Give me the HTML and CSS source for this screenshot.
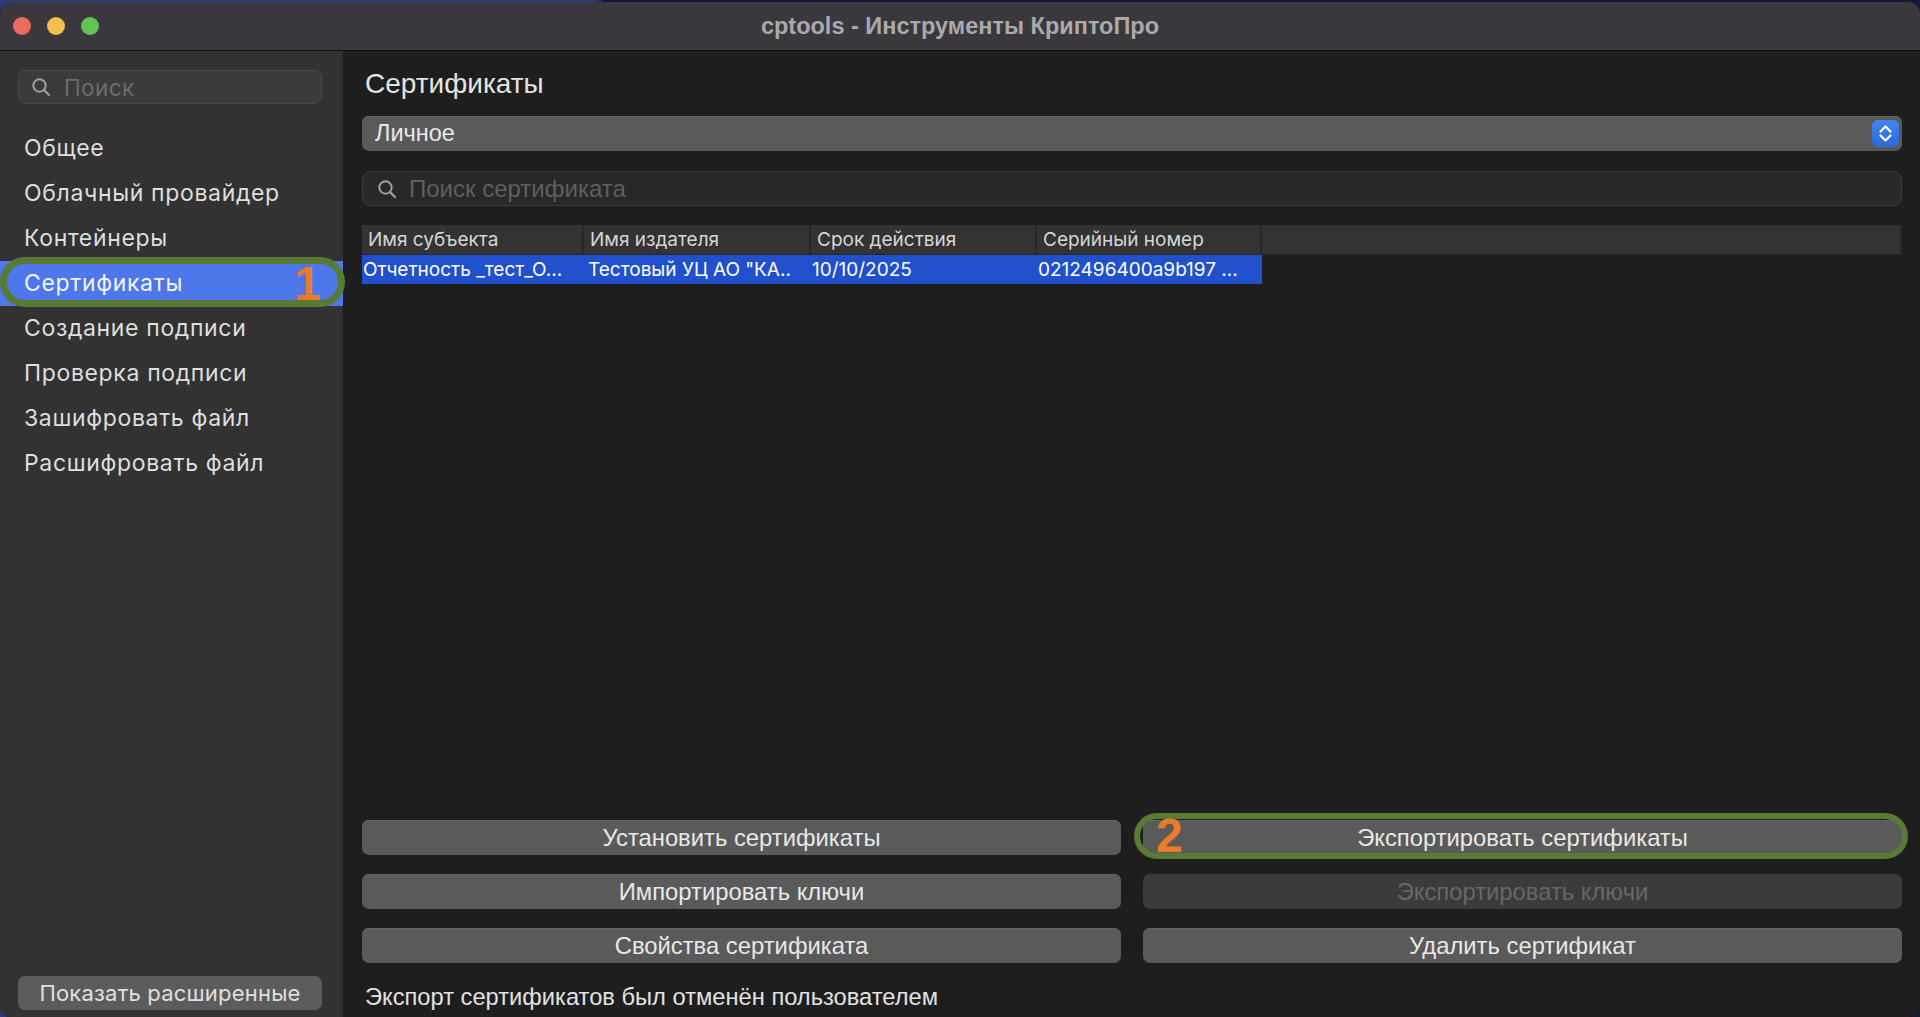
FILE: index.html
```html
<!DOCTYPE html>
<html lang="ru">
<head>
<meta charset="utf-8">
<title>cptools - Инструменты КриптоПро</title>
<link rel="stylesheet" href="styles.css">
</head>
<body>
<div class="desktop">
  <div class="window">
    <header class="titlebar">
      <div class="lights">
        <span class="light red"></span>
        <span class="light yellow"></span>
        <span class="light green"></span>
      </div>
      <div class="title">cptools - Инструменты КриптоПро</div>
      <div></div>
    </header>
    <div class="main">
      <aside class="sidebar">
        <div class="side-search">
          <svg class="icon-search" width="20" height="20" viewBox="0 0 20 20"><circle cx="8.5" cy="8.5" r="6.2" fill="none" stroke="#a2a2a2" stroke-width="2"/><path d="M13 13l5 5" stroke="#a2a2a2" stroke-width="2.2" stroke-linecap="round"/></svg>
          <span class="placeholder">Поиск</span>
        </div>
        <nav class="nav">
          <div class="nav-item">Общее</div>
          <div class="nav-item">Облачный провайдер</div>
          <div class="nav-item">Контейнеры</div>
          <div class="nav-item active">Сертификаты
            <div class="mark mark-1"><span class="mark-num num-1">1</span></div>
          </div>
          <div class="nav-item">Создание подписи</div>
          <div class="nav-item">Проверка подписи</div>
          <div class="nav-item">Зашифровать файл</div>
          <div class="nav-item">Расшифровать файл</div>
        </nav>
        <button class="side-btn">Показать расширенные</button>
      </aside>
      <section class="content">
        <h1 class="heading">Сертификаты</h1>
        <div class="select">
          <span>Личное</span>
          <span class="stepper"><svg width="27" height="27" viewBox="0 0 27 27"><path d="M8.5 11.5l5-5 5 5" fill="none" stroke="#fff" stroke-width="2.3" stroke-linecap="round" stroke-linejoin="round"/><path d="M8.5 15.5l5 5 5-5" fill="none" stroke="#fff" stroke-width="2.3" stroke-linecap="round" stroke-linejoin="round"/></svg></span>
        </div>
        <div class="search">
          <svg class="icon-search" width="20" height="20" viewBox="0 0 20 20"><circle cx="8.5" cy="8.5" r="6.2" fill="none" stroke="#a2a2a2" stroke-width="2"/><path d="M13 13l5 5" stroke="#a2a2a2" stroke-width="2.2" stroke-linecap="round"/></svg>
          <span class="placeholder2">Поиск сертификата</span>
        </div>
        <div class="table">
          <div class="thead">
            <div class="th">Имя субъекта</div>
            <div class="th">Имя издателя</div>
            <div class="th">Срок действия</div>
            <div class="th">Серийный номер</div>
            <div class="th"></div>
          </div>
          <div class="trow">
            <div class="td">Отчетность _тест_О...</div>
            <div class="td td-2">Тестовый УЦ АО "КА..</div>
            <div class="td">10/10/2025</div>
            <div class="td">0212496400a9b197 ...</div>
          </div>
        </div>
        <div class="buttons">
          <button class="btn">Установить сертификаты</button>
          <button class="btn btn-export">Экспортировать сертификаты
            <span class="mark mark-2"><span class="mark-num num-2">2</span></span>
          </button>
          <button class="btn">Импортировать ключи</button>
          <button class="btn disabled">Экспортировать ключи</button>
          <button class="btn">Свойства сертификата</button>
          <button class="btn">Удалить сертификат</button>
        </div>
        <div class="status">Экспорт сертификатов был отменён пользователем</div>
      </section>
    </div>
  </div>
</div>
</body>
</html>
```

FILE: styles.css
```css
* { box-sizing: border-box; }
html, body { margin: 0; padding: 0; }
body {
  width: 1920px;
  height: 1017px;
  overflow: hidden;
  background: #161a38;
  font-family: "Liberation Sans", Arial, sans-serif;
}
.desktop {
  height: 1017px;
  padding-top: 2px;
  background: linear-gradient(90deg, #2b3c7c 0, #2b3c7c 31%, #141838 31.5%, #141838 100%);
}
.window {
  height: 1015px;
  display: flex;
  flex-direction: column;
  border-radius: 12px 12px 10px 10px;
  overflow: hidden;
  background: #1e1e1e;
}
.titlebar {
  flex: none;
  height: 49px;
  display: grid;
  grid-template-columns: 1fr auto 1fr;
  align-items: center;
  background: #3a383c;
  border-bottom: 1px solid #111;
}
.lights { display: flex; gap: 16px; padding-left: 13px; }
.light { width: 18px; height: 18px; border-radius: 50%; display: block; }
.red { background: #ed6a5e; }
.yellow { background: #f4bf4f; }
.green { background: #61c554; }
.title {
  color: #aaa9ab;
  font-weight: bold;
  font-size: 23.5px;
}
.main { flex: 1; display: flex; min-height: 0; }

/* sidebar */
.sidebar {
  width: 343px;
  flex: none;
  background: #323232;
  display: flex;
  flex-direction: column;
  padding: 19px 0 7px;
  font-family: Inter, "Liberation Sans", sans-serif;
}
.side-search {
  height: 34px;
  margin: 0 21px 0 18px;
  background: #3b3b3b;
  border: 1px solid #474747;
  border-radius: 7px;
  display: flex;
  align-items: center;
  gap: 13px;
  padding-left: 12px;
}
.icon-search { flex: none; }
.placeholder { color: #6c6c6c; font-size: 22.5px; letter-spacing: 0.4px; }
.nav { margin-top: 22px; display: flex; flex-direction: column; }
.nav-item {
  position: relative;
  height: 45px;
  line-height: 45px;
  padding-left: 24px;
  color: #dedede;
  font-size: 23px;
  letter-spacing: 0.65px;
}
.nav-item.active { background: #4d77ea; color: #f4f4f4; }
.side-btn {
  margin: auto 21px 0 18px;
  height: 34px;
  border: none;
  border-radius: 7px;
  background: #5c5c5c;
  color: #e0e0e0;
  font-family: Inter, "Liberation Sans", sans-serif;
  font-size: 22px;
  letter-spacing: 0.2px;
  padding: 0;
}

/* annotations */
.mark {
  position: absolute;
  border: 7px solid #587a34;
  border-radius: 26px;
  pointer-events: none;
}
.mark-1 { left: 0; top: -4px; width: 345px; height: 50px; }
.mark-2 { left: -9px; top: -7px; width: 774px; height: 46px; border-width: 6px; }
.mark-num {
  position: absolute;
  font-family: "Liberation Sans", Arial, sans-serif;
  font-weight: bold;
  font-size: 48px;
  line-height: 48px;
  color: #ea7a2c;
}
.num-1 { left: 287px; top: -4px; }
.num-2 { left: 16px; top: -7px; }

/* content */
.content {
  flex: 1;
  min-width: 0;
  display: flex;
  flex-direction: column;
  padding: 15px 18px 0 19px;
}
.heading {
  margin: 0 0 14px 3px;
  font-weight: normal;
  font-size: 28px;
  line-height: 36px;
  color: #e4e4e4;
}
.select {
  flex: none;
  height: 35px;
  background: #5a5a5a;
  border-radius: 7px;
  box-shadow: inset 0 1px 0 #666;
  display: flex;
  align-items: center;
  justify-content: space-between;
  padding: 0 3px 0 13px;
  font-size: 23.5px;
  color: #e8e8e8;
}
.stepper {
  width: 27px;
  height: 27px;
  border-radius: 6px;
  background: linear-gradient(#4285ec, #2d68d8);
  display: flex;
}
.search {
  flex: none;
  margin-top: 20px;
  height: 35px;
  background: #282828;
  border: 1px solid #3b3b3b;
  border-radius: 8px;
  display: flex;
  align-items: center;
  gap: 12px;
  padding-left: 14px;
}
.placeholder2 { color: #5f5f5f; font-size: 24px; }

.table {
  flex: 1;
  margin-top: 19px;
  min-height: 0;
  font-family: Inter, "Liberation Sans", sans-serif;
  font-size: 19px;
}
.thead {
  display: grid;
  grid-template-columns: 222px 227px 226px 225px 1fr;
  height: 30px;
  background: #333;
  border-bottom: 1px solid #262626;
}
.th {
  padding-left: 6px;
  line-height: 29px;
  color: #d6d6d6;
  border-right: 2px solid #282828;
  white-space: nowrap;
}
.trow {
  display: grid;
  grid-template-columns: 222px 227px 226px 225px;
  width: 900px;
  height: 29px;
  background: #2150cc;
  color: #fff;
}
.td {
  padding-left: 1px;
  line-height: 29px;
  white-space: nowrap;
  overflow: hidden;
}
.td-2 { padding-left: 4px; }

.buttons {
  flex: none;
  display: grid;
  grid-template-columns: 1fr 1fr;
  column-gap: 22px;
  row-gap: 19px;
}
.btn {
  position: relative;
  height: 35px;
  border: none;
  border-radius: 7px;
  background: #5a5a5a;
  box-shadow: inset 0 1px 0 #656565;
  color: #e8e8e8;
  font-family: "Liberation Sans", Arial, sans-serif;
  font-size: 23.8px;
  padding: 0;
}
.btn.disabled { background: #3b3b3b; box-shadow: none; color: #676767; }
.status {
  flex: none;
  height: 40px;
  margin-top: 14px;
  line-height: 40px;
  padding-left: 3px;
  font-size: 23.7px;
  color: #e2e2e2;
}
```
